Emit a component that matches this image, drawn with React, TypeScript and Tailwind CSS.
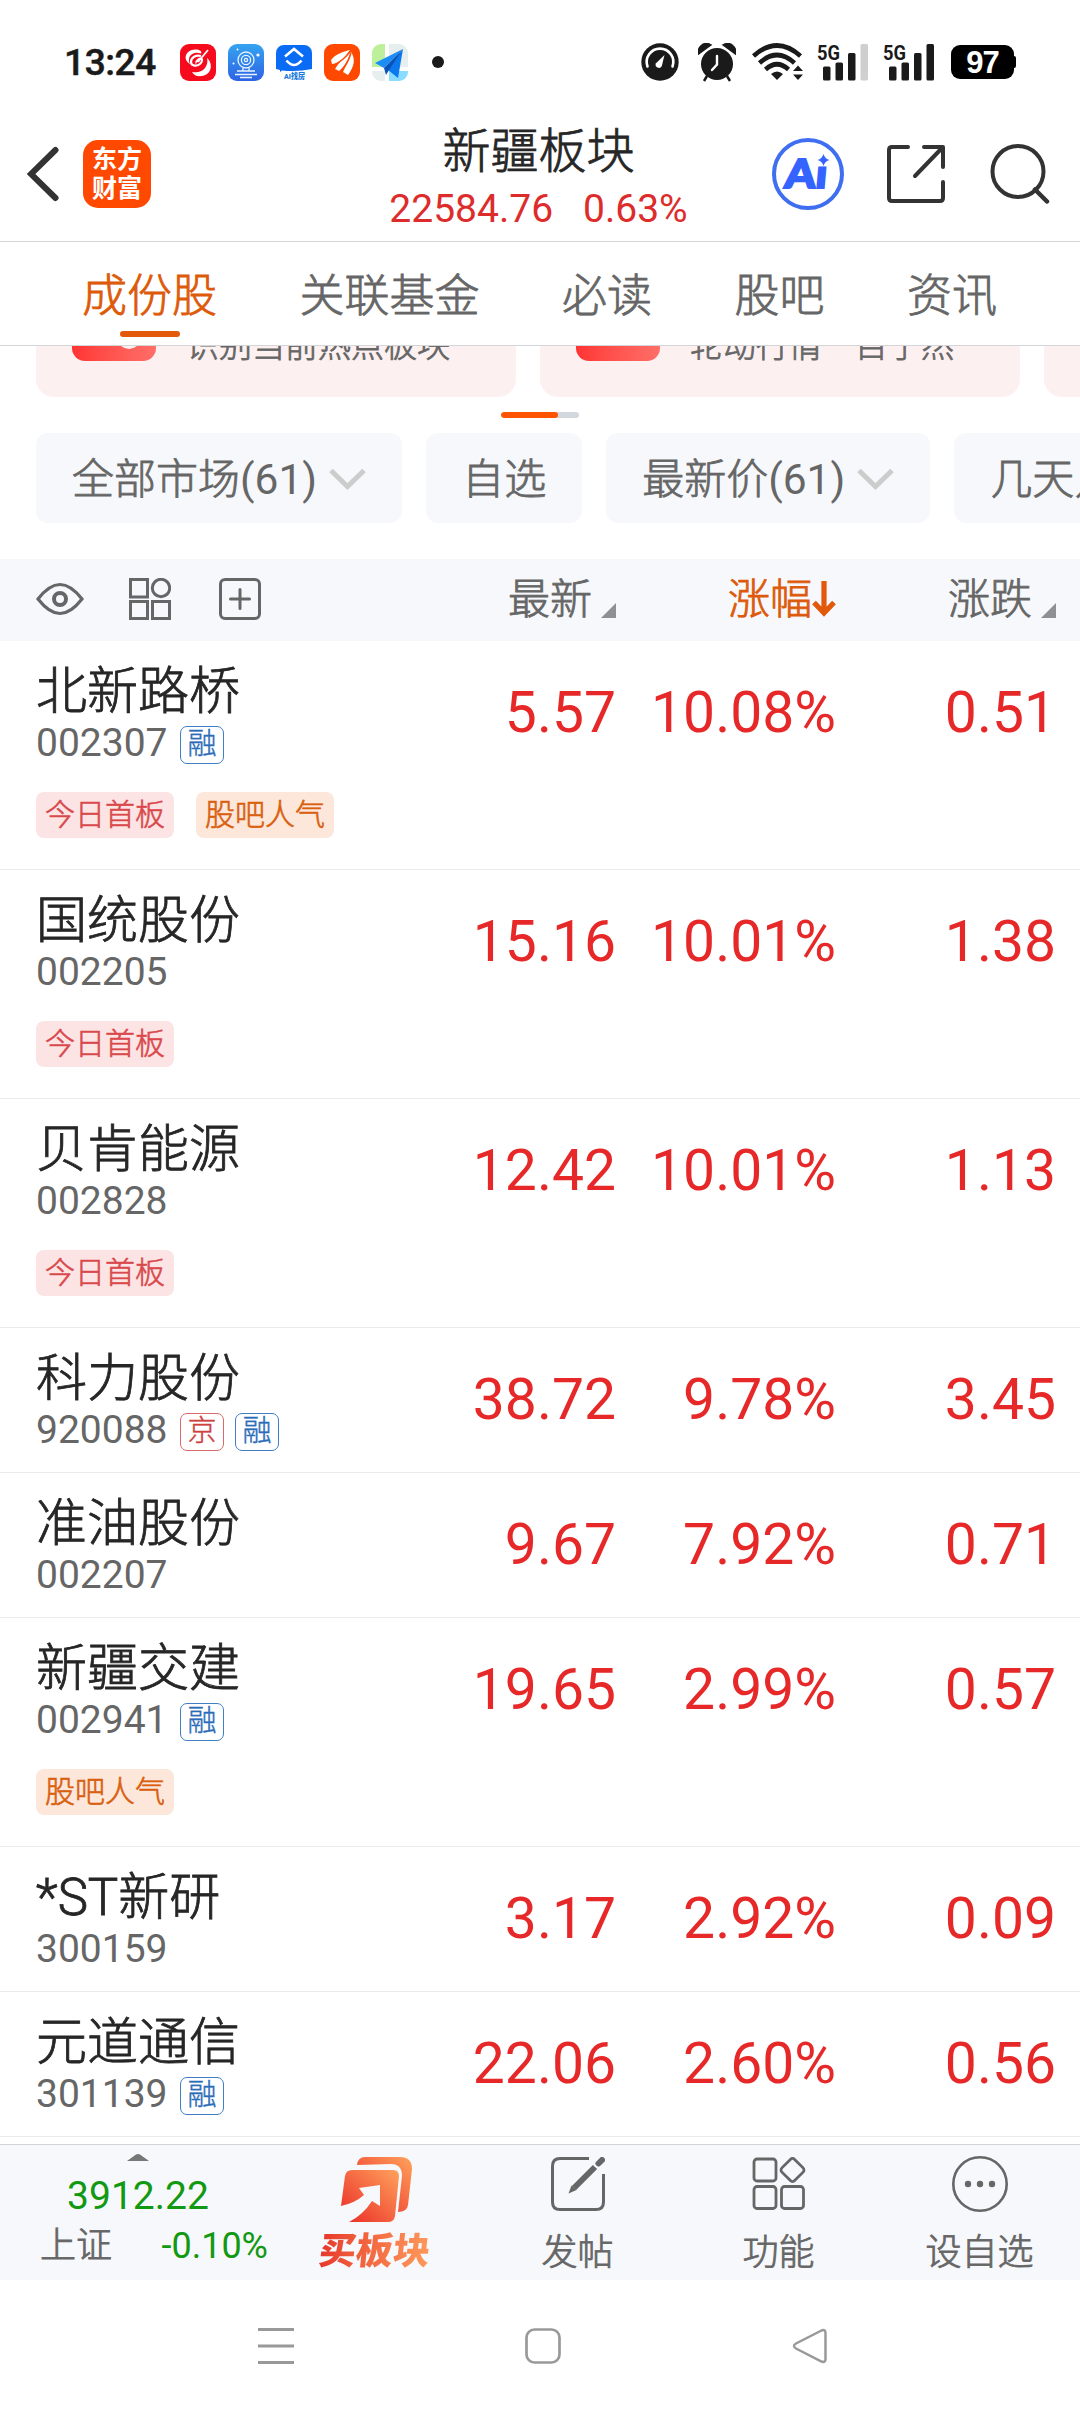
import React from "react";

interface Stock {
  name: string;
  code: string;
  marks?: string[];
  tags?: string[];
  price: string;
  percent: string;
  change: string;
}

const stocks: Stock[] = [
  {
    name: "北新路桥",
    code: "002307",
    marks: ["融"],
    tags: ["今日首板", "股吧人气"],
    price: "5.57",
    percent: "10.08%",
    change: "0.51",
  },
  {
    name: "国统股份",
    code: "002205",
    tags: ["今日首板"],
    price: "15.16",
    percent: "10.01%",
    change: "1.38",
  },
  {
    name: "贝肯能源",
    code: "002828",
    tags: ["今日首板"],
    price: "12.42",
    percent: "10.01%",
    change: "1.13",
  },
  {
    name: "科力股份",
    code: "920088",
    marks: ["京", "融"],
    price: "38.72",
    percent: "9.78%",
    change: "3.45",
  },
  {
    name: "准油股份",
    code: "002207",
    price: "9.67",
    percent: "7.92%",
    change: "0.71",
  },
  {
    name: "新疆交建",
    code: "002941",
    marks: ["融"],
    tags: ["股吧人气"],
    price: "19.65",
    percent: "2.99%",
    change: "0.57",
  },
  {
    name: "*ST新研",
    code: "300159",
    price: "3.17",
    percent: "2.92%",
    change: "0.09",
  },
  {
    name: "元道通信",
    code: "301139",
    marks: ["融"],
    price: "22.06",
    percent: "2.60%",
    change: "0.56",
  },
];

const tabs = ["成份股", "关联基金", "必读", "股吧", "资讯"];

const filters = [
  { label: "全部市场", count: "(61)" },
  { label: "自选" },
  { label: "最新价", count: "(61)" },
  { label: "几天几板" },
];

// light CJK strokes are a bit too thin, regular ones too heavy
const demi = "font-light [-webkit-text-stroke:0.8px]";

const AppIcons = () => (
  <div className="flex gap-3 ml-[25px]">
    <svg width="36" height="37" viewBox="0 0 36 37" fill="none">
      <rect width="36" height="37" rx="9" fill="#f50a1e" />
      <path
        d="M10 20C2 15 6 6 15 5.500c5 0 7 2 6 4-5-2-10 0-11.500 3.500C8.500 16 9 18 10 20z"
        fill="#fff"
      />
      <path
        d="M27 14c6 5 5 15-3 17.500-5 1.500-10 .5-12-3.500 5 1 10 0 13-4 2-3 3-6 2-10z"
        fill="#fff"
      />
      <path
        d="M21 12c-5-1.500-10 1.500-10 6 0 4 6 5 9.500 1.500 2-2 2-5 0-5s-5 4-4 4.500"
        stroke="#fff"
        strokeWidth="2.200"
      />
      <path d="M28 6 18 18" stroke="#fff" strokeWidth="1.800" />
    </svg>
    <svg width="36" height="37" viewBox="0 0 36 37" fill="none">
      <defs>
        <linearGradient id="cam" x1="0" y1="0" x2="0" y2="1">
          <stop stopColor="#35a4f1" />
          <stop offset="1" stopColor="#2e62e4" />
        </linearGradient>
      </defs>
      <rect width="36" height="37" rx="9" fill="url(#cam)" />
      <g stroke="#e8f4ff" strokeWidth="1.300">
        <circle cx="18" cy="16" r="8" />
        <circle cx="18" cy="16" r="4.600" />
        <circle cx="18" cy="16" r="1.600" />
        <path d="M15 24v3h6v-3M9 27h18M7 30.500h22M12 33.500h12" />
      </g>
      <circle cx="30" cy="11" r="1.600" fill="#fff" />
      <circle cx="9.500" cy="5.500" r="1" fill="#fff" />
      <circle cx="5.500" cy="19.500" r="1" fill="#fff" />
    </svg>
    <svg width="36" height="37" viewBox="0 0 36 37" fill="none">
      <path
        d="M8 1h20a8 8 0 0 1 8 8v16q-14 3-30 1.500L4 28v-2l-4-1V9a8 8 0 0 1 8-8z"
        fill="#0a6cf5"
      />
      <path
        d="M9 12.500 18 5l9 7.500M10.500 16.500q7.500 9 15 0"
        stroke="#fff"
        strokeWidth="2.600"
      />
      <text
        x="8"
        y="34.500"
        fontSize="7.500"
        fontWeight="900"
        fill="#1478dc"
        textLength="21"
        lengthAdjust="spacingAndGlyphs"
        className="font-['Roboto','Noto_Sans_CJK_SC',sans-serif]"
      >
        AI找房
      </text>
    </svg>
    <svg width="36" height="37" viewBox="0 0 36 37" fill="none">
      <rect width="36" height="37" rx="9" fill="#ff4800" />
      <path d="M26 6C21 7 11 10 7 16l1 4c8-1 12-6 18-14z" fill="#fff" />
      <path d="M27 7c-6 5-12 11-16 18l4 2C21 22 24 16 27 7z" fill="#fff" />
      <path d="M27 8c-1 8-5 13-8 20l5 3c6-8 8-16 3-23z" fill="#fff" />
      <path
        d="M27 7C22 13 17 18 10 21M27 9c-2 8-6 13-9.500 19"
        stroke="#ff4800"
        strokeWidth="1.200"
      />
    </svg>
    <svg width="36" height="37" viewBox="0 0 36 37" fill="none">
      <path d="M9 0h4v23H0V9a9 9 0 0 1 9-9z" fill="#bdf09b" />
      <path d="M17 0h10a9 9 0 0 1 9 9v14H17z" fill="#e6eeee" />
      <path d="M0 27h13v10H9a9 9 0 0 1-9-9z" fill="#e6eeee" />
      <path d="M17 27h19v1a9 9 0 0 1-9 9H17z" fill="#8adcff" />
      <path d="M31 5 3 19l9 5z" fill="#1c8df5" />
      <path d="M31 5 26 34 16 26z" fill="#0b78ee" />
      <path d="M31 5 12 24l2 7 3-5z" fill="#0a52b8" />
    </svg>
  </div>
);

const Signal = ({ weak }: { weak?: boolean }) => (
  <svg
    className="overflow-visible"
    width="52"
    height="38"
    viewBox="0 0 52 38"
    fill="#1a1a1a"
  >
    <text
      x="0"
      y="16.500"
      fontSize="21"
      fontWeight="700"
      textLength="23"
      lengthAdjust="spacingAndGlyphs"
      className="font-['Roboto',sans-serif]"
    >
      5G
    </text>
    <rect x="6" y="23.500" width="7.500" height="14" rx="1.500" />
    <rect x="18.500" y="19.500" width="7.500" height="18" rx="1.500" />
    <rect x="31" y="10" width="7.500" height="27.500" rx="1.500" />
    <rect
      x="43.500"
      y="1"
      width="7.500"
      height="36.500"
      rx="1.500"
      fill={weak ? "#cfcfcf" : "#1a1a1a"}
    />
  </svg>
);

const StatusBar = () => (
  <div className="h-[124px] flex items-center px-16 text-[#1a1a1a]">
    <span className="text-[37px] leading-none font-medium [-webkit-text-stroke:0.5px] tracking-[-0.4px] w-[91px] whitespace-nowrap">
      13:24
    </span>
    <AppIcons />
    <span className="w-3 h-3 rounded-full bg-[#1a1a1a] ml-6" />
    <div className="flex items-center ml-auto">
      <svg width="38" height="38" viewBox="0 0 38 38" fill="none">
        <circle cx="19" cy="19" r="18.700" fill="#1a1a1a" />
        <path
          d="M6.500 23.500a13.300 13.300 0 1 1 25 0"
          stroke="#fff"
          strokeWidth="2.600"
          strokeLinecap="round"
        />
        <path
          d="M23.500 12 20.800 23a3.200 3.200 0 1 1-5.800-2.800z"
          fill="#fff"
        />
      </svg>
      <svg
        className="ml-[19px]"
        width="38"
        height="39"
        viewBox="0 0 38 39"
        fill="none"
      >
        <path
          d="M1 10C0 4 6-1 12 2zM37 10c1-6-5-11-11-8zM9 33l-3 5M29 33l3 5"
          fill="#1a1a1a"
          stroke="#1a1a1a"
          strokeWidth="2.500"
        />
        <circle cx="19" cy="21" r="16" fill="#1a1a1a" />
        <path
          d="M19 13v8.500L14 27"
          stroke="#fff"
          strokeWidth="2.400"
          strokeLinecap="round"
        />
      </svg>
      <svg
        className="ml-[16px]"
        width="52"
        height="38"
        viewBox="0 0 52 38"
        fill="none"
      >
        <g stroke="#1a1a1a" strokeWidth="4.600">
          <path d="M1.500 13Q25 -8 48.500 13" />
          <path d="M7.500 20Q25 4 42.500 20" />
          <path d="M13.500 26.500Q25 16 36.500 26.500" />
        </g>
        <path d="M19 31q6-5 12 0l-6 6z" fill="#1a1a1a" />
        <path d="M46 22.500l5 5.500H41zM46 37l5-5.500H41z" fill="#1a1a1a" />
      </svg>
      <div className="ml-[13px] flex gap-[14px]">
        <Signal weak />
        <Signal />
      </div>
      <div className="ml-[16px] flex items-center">
        <span className="w-[63px] h-[34px] rounded-[9px] bg-black text-white text-[31px] leading-[35px] font-bold text-center font-['Liberation_Sans',sans-serif] tracking-[-1px]">
          97
        </span>
        <span className="w-[2px] h-3 rounded-r-sm bg-black" />
      </div>
    </div>
  </div>
);

const Header = () => (
  <div className="h-[118px] flex items-start border-b border-[#d3d5d8]">
    <div className="flex-1 flex items-center pl-[27px] pt-4">
      <svg width="32" height="56" viewBox="0 0 32 56" fill="none">
        <path
          d="M28.500 4 4 28l24.500 24"
          stroke="#333"
          strokeWidth="6"
          strokeLinecap="round"
        />
      </svg>
      <div className="ml-6 w-[68px] h-[68px] rounded-[15px] bg-[#ff4800] text-white text-[25px] leading-[29px] font-bold text-center pt-[5px]">
        东方
        <br />
        财富
      </div>
    </div>
    <div className="text-center">
      <h1
        className={`text-[48px] leading-[54px] mt-px text-[#262626] ${demi}`}
      >
        新疆板块
      </h1>
      <div className="flex justify-center gap-[30px] text-[39px] leading-[46px] mt-[7px] text-[#dd2c2c]">
        <span>22584.76</span>
        <span>0.63%</span>
      </div>
    </div>
    <div className="flex-1 flex justify-end items-center pr-[30px] pt-[14px]">
      <svg width="72" height="72" viewBox="0 0 72 72" fill="none">
        <circle cx="36" cy="36" r="34" stroke="#3f6ef0" strokeWidth="4" />
        <g transform="translate(4.500 0) skewX(-5)">
          <text
            x="12"
            y="50"
            fontSize="40"
            fontWeight="900"
            fill="#3563ff"
            stroke="#3563ff"
            strokeWidth="2"
            textLength="42"
            lengthAdjust="spacingAndGlyphs"
            className="font-['Lato','Roboto',sans-serif]"
          >
            Aı
          </text>
        </g>
        <path
          d="M51.500 16q1.500 5 6 6-4.500 1-6 6-1.500-5-6-6 4.500-1 6-6z"
          fill="#3563ff"
        />
      </svg>
      <svg
        className="ml-[42px]"
        width="60"
        height="60"
        viewBox="0 0 60 60"
        fill="none"
        stroke="#333"
        strokeWidth="4"
        strokeLinecap="round"
        strokeLinejoin="round"
      >
        <path d="M22 3H6q-3 0-3 3v48q0 3 3 3h48q3 0 3-3V38" />
        <path d="M38 3h19v20M56 4 29 32" />
      </svg>
      <svg
        className="ml-[42px] -mt-[3px]"
        width="62"
        height="62"
        viewBox="0 0 62 62"
        fill="none"
        stroke="#333"
        strokeWidth="4"
      >
        <circle cx="30" cy="29.500" r="25.500" />
        <path
          d="M47 47.500 59 59.500"
          strokeWidth="4.500"
          strokeLinecap="round"
        />
      </svg>
    </div>
  </div>
);

const Tabs = () => (
  <div
    className={`h-[104px] border-b border-[#d3d5d8] flex pl-[82px] gap-[82.500px] text-[45px] leading-[64px] text-[#666] pt-[23px] ${demi}`}
  >
    {tabs.map((tab, index) => (
      <div key={tab} className="flex flex-col items-center">
        <span className={index === 0 ? "text-[#dd5a0a]" : "text-[#666]"}>
          {tab}
        </span>
        {index === 0 && (
          <span className="w-[60px] h-[6px] rounded-full bg-[#e2590b] mt-[2px]" />
        )}
      </div>
    ))}
  </div>
);

const Banners = () => (
  <div className="h-[87px] overflow-hidden">
    <div className="h-[51px] flex gap-6 pl-9">
      {["识别当前热点板块", "轮动行情一目了然", ""].map((text, index) => (
        <div
          key={index}
          className="w-[480px] h-[51px] shrink-0 rounded-b-[18px] bg-[#fdf0f0] flex pl-9 overflow-hidden"
        >
          <div className="w-[84px] h-[15px] rounded-b-[13px] bg-linear-to-r from-[#ff3333] to-[#ff6e68] overflow-hidden">
            {index === 0 && (
              <div className="w-6 h-6 rounded-full bg-[#fff0f0] ml-[45px] -mt-[21px]" />
            )}
          </div>
          <span
            className={`ml-[30px] -mt-[17px] h-[34px] text-[33px] leading-[34px] text-[#666] whitespace-nowrap ${demi}`}
          >
            {text}
          </span>
        </div>
      ))}
    </div>
    <div className="w-[78px] h-[6px] mx-auto mt-[15px] rounded-full bg-[#d3d7de] overflow-hidden">
      <div className="w-[57px] h-full rounded-full bg-[#ff5500]" />
    </div>
  </div>
);

const Filters = () => (
  <div className="flex gap-6 pl-9 h-[90px] mb-9 overflow-hidden">
    {filters.map((item) => (
      <div
        key={item.label}
        className="h-[90px] shrink-0 px-9 pt-1 rounded-[12px] bg-[#f6f8fb] flex items-center text-[42px] leading-none text-[#666] whitespace-nowrap"
      >
        <span className={demi}>{item.label}</span>
        {item.count && (
          <>
            <span className="text-[42.500px]">{item.count}</span>
            <svg
              className="ml-[12px] mt-[-3px]"
              width="37"
              height="22"
              viewBox="0 0 37 22"
              fill="none"
            >
              <path
                d="M2 2.500 18.500 18.500 35 2.500"
                stroke="#ccc"
                strokeWidth="5"
              />
            </svg>
          </>
        )}
      </div>
    ))}
  </div>
);

const Corner = () => (
  <svg
    className="ml-[9px] mt-[24px]"
    width="15"
    height="15"
    viewBox="0 0 15 15"
  >
    <path d="M15 0v15H0z" fill="#8f9095" />
  </svg>
);

const TableHead = () => (
  <div
    className={`h-[82px] bg-[#f6f8fb] flex items-center pl-9 pr-6 text-[42px] leading-none text-[#666] ${demi}`}
  >
    <div className="flex-1 flex items-center -mt-[2px]">
      <svg
        width="48"
        height="34"
        viewBox="0 0 48 34"
        fill="none"
        stroke="#666"
        strokeWidth="3.200"
      >
        <path d="M2 17C9 8 16 2.500 24 2.500S39 8 46 17C39 26 32 31.500 24 31.500S9 26 2 17z" />
        <circle cx="24" cy="17" r="6" strokeWidth="4" />
      </svg>
      <svg
        className="ml-[45px]"
        width="42"
        height="42"
        viewBox="0 0 42 42"
        fill="none"
        stroke="#666"
        strokeWidth="3"
      >
        <rect x="1.500" y="1.500" width="17" height="17.500" />
        <circle cx="32" cy="10" r="8.700" />
        <rect x="1.500" y="23.500" width="17" height="17" />
        <rect x="23.500" y="23.500" width="17" height="17" />
      </svg>
      <svg
        className="ml-[48px]"
        width="42"
        height="42"
        viewBox="0 0 42 42"
        fill="none"
        stroke="#666"
        strokeWidth="3"
      >
        <rect x="1.500" y="1.500" width="39" height="39" rx="4.500" />
        <path d="M21 11.500v19M11.500 21h19" strokeLinecap="round" />
      </svg>
    </div>
    <div className="w-[220px] flex justify-end">
      最新
      <Corner />
    </div>
    <div className="w-[220px] flex justify-end text-[#dd5a0a]">
      涨幅
      <svg
        className="mt-[2px]"
        width="24"
        height="36"
        viewBox="0 0 24 36"
        fill="none"
      >
        <path
          d="M12 0v31M2 21.500 12 32l10-10.500"
          stroke="#e2590b"
          strokeWidth="5.200"
        />
      </svg>
    </div>
    <div className="w-[220px] flex justify-end">
      涨跌
      <Corner />
    </div>
  </div>
);

const StockRow = ({ stock }: { stock: Stock }) => (
  <div
    className={`flex pl-9 pr-6 border-b border-[#e9eaec] ${
      stock.tags ? "h-[229px]" : "h-[145px]"
    }`}
  >
    <div className="flex-1 min-w-0">
      <p
        className={`text-[51px] leading-[60px] mt-[21px] text-[#262626] whitespace-nowrap ${demi}`}
      >
        {stock.name}
      </p>
      <div className="flex items-center h-[46px] -mt-[2px]">
        <span className="text-[39px] leading-[46px] text-[#666] w-[144px]">
          {stock.code}
        </span>
        {stock.marks?.map((mark) => (
          <span
            key={mark}
            className={`w-[44px] h-[38px] mr-[11px] mt-[4px] rounded-[7px] border text-[29px] leading-[34px] text-center font-light [-webkit-text-stroke:0.4px] ${
              mark === "京"
                ? "border-[#d9686a] text-[#cf4040]"
                : "border-[#3f7fc2] text-[#2a6cb8]"
            }`}
          >
            {mark}
          </span>
        ))}
      </div>
      {stock.tags && (
        <div className="flex gap-[22px] mt-[26px]">
          {stock.tags.map((tag) => (
            <span
              key={tag}
              className={`h-[46px] px-[9px] rounded-[8px] text-[30px] leading-[46px] font-light [-webkit-text-stroke:0.6px] ${
                tag === "今日首板"
                  ? "bg-[#fce4e5] text-[#d9494c]"
                  : "bg-[#fce7da] text-[#d9600f]"
              }`}
            >
              {tag}
            </span>
          ))}
        </div>
      )}
    </div>
    <div className="flex text-[57px] leading-[68px] text-right text-[#e62828] mt-[38px]">
      <span className="w-[220px]">{stock.price}</span>
      <span className="w-[220px]">{stock.percent}</span>
      <span className="w-[220px]">{stock.change}</span>
    </div>
  </div>
);

const BottomBar = () => (
  <div className="h-[136px] shrink-0 bg-[#f6f8fb] border-t border-[#cfd4da] flex text-[36px] text-[#666]">
    <div className="w-[276px] flex flex-col items-center pt-[9px]">
      <svg width="22" height="7" viewBox="0 0 22 7">
        <path d="M0 7 9 .6q2-1 4 0L22 7z" fill="#777" />
      </svg>
      <span className="text-[39px] leading-[46px] mt-[12px] text-[#129912]">
        3912.22
      </span>
      <div className="w-full flex justify-between pl-[40px] pr-[8px] leading-[46px] mt-[3px] whitespace-nowrap">
        <span className={`mt-px ${demi}`}>上证</span>
        <span className="mt-px text-[#129912]">-0.10%</span>
      </div>
    </div>
    <div className="w-[201px] flex flex-col items-center pt-[12px]">
      <svg width="72" height="66" viewBox="0 0 72 66" fill="none">
        <defs>
          <linearGradient id="buy" x1="0" y1="1" x2="1" y2="0">
            <stop stopColor="#ea2a26" />
            <stop offset="1" stopColor="#ffa25c" />
          </linearGradient>
        </defs>
        <path
          d="M16 8q1-8 8-8h35q12 0 12 12l-4 36q-1 7-10 7l4-36q0-12-11-12z"
          fill="url(#buy)"
        />
        <path
          d="M0 49 4 19q1-6 7-6h41q6 0 6 6l-4 40q-1 6-7 6H8Q22 58 31 44l8 5V28l-21 3 5 7Q14 46 0 49z"
          fill="url(#buy)"
        />
      </svg>
      <span className="mt-[6px] -ml-1 text-[37px] leading-[46px] font-black bg-linear-to-r from-[#e5302a] to-[#ff9c5c] bg-clip-text text-transparent px-1 -skew-x-6">
        买板块
      </span>
    </div>
    <div className="w-[201px] flex flex-col items-center pt-[12px]">
      <svg
        width="54"
        height="54"
        viewBox="0 0 54 54"
        fill="none"
        stroke="#666"
        strokeWidth="3"
      >
        <path d="M38 1.500H9Q1.500 1.500 1.500 9v36q0 7.500 7.500 7.500h36q7.500 0 7.500-7.500V17" />
        <path d="M44 10 23 31" strokeWidth="6" />
        <path
          d="M20.500 28.500 17.500 36.500 25.500 33z"
          fill="#666"
          stroke="none"
        />
        <path d="M47.500 6.500 51 3" strokeWidth="6" strokeLinecap="round" />
      </svg>
      <span className={`mt-[19px] leading-[46px] ${demi}`}>发帖</span>
    </div>
    <div className="w-[201px] flex flex-col items-center pt-[12px]">
      <svg
        width="54"
        height="54"
        viewBox="0 0 54 54"
        fill="none"
        stroke="#666"
        strokeWidth="2.800"
      >
        <rect x="2" y="2" width="22" height="22" rx="3" />
        <rect x="2" y="29.500" width="22" height="22" rx="3" />
        <rect x="29.500" y="29.500" width="22" height="22" rx="3" />
        <rect
          x="31.500"
          y="4"
          width="18"
          height="18"
          rx="3"
          transform="rotate(45 40.500 13)"
        />
      </svg>
      <span className={`mt-[19px] leading-[46px] ${demi}`}>功能</span>
    </div>
    <div className="w-[201px] flex flex-col items-center pt-[11px]">
      <svg width="56" height="56" viewBox="0 0 56 56" fill="none">
        <circle cx="28" cy="28" r="26.700" stroke="#666" strokeWidth="2.600" />
        <circle cx="16" cy="28" r="3.200" fill="#666" />
        <circle cx="28" cy="28" r="3.200" fill="#666" />
        <circle cx="40" cy="28" r="3.200" fill="#666" />
      </svg>
      <span className={`mt-[18px] leading-[46px] ${demi}`}>设自选</span>
    </div>
  </div>
);

const SystemNav = () => (
  <div className="h-[132px] shrink-0 bg-white flex items-center justify-between pl-[258px] pr-[252px]">
    <svg
      width="36"
      height="36"
      viewBox="0 0 36 36"
      stroke="#999"
      strokeWidth="3"
    >
      <path d="M0 1.500h36M0 18h36M0 34.500h36" />
    </svg>
    <svg
      width="36"
      height="36"
      viewBox="0 0 36 36"
      fill="none"
      stroke="#999"
      strokeWidth="2.700"
    >
      <rect x="1.500" y="1.500" width="33" height="33" rx="8" />
    </svg>
    <svg
      width="36"
      height="36"
      viewBox="0 0 36 36"
      fill="none"
      stroke="#999"
      strokeWidth="2.500"
    >
      <path d="M29.500 2.500 4 15.500q-4 2.500 0 5l25.500 13q4 1.500 4-2.500V5q0-4-4-2.500z" />
    </svg>
  </div>
);

const App = () => {
  return (
    <div className="w-[1080px] h-[2412px] overflow-hidden bg-white flex flex-col font-['Roboto','Noto_Sans_CJK_SC',sans-serif]">
      <StatusBar />
      <Header />
      <Tabs />
      <Banners />
      <Filters />
      <TableHead />
      <div className="flex-1 overflow-hidden">
        {stocks.map((stock) => (
          <StockRow key={stock.code} stock={stock} />
        ))}
      </div>
      <BottomBar />
      <SystemNav />
    </div>
  );
};

export default App;
